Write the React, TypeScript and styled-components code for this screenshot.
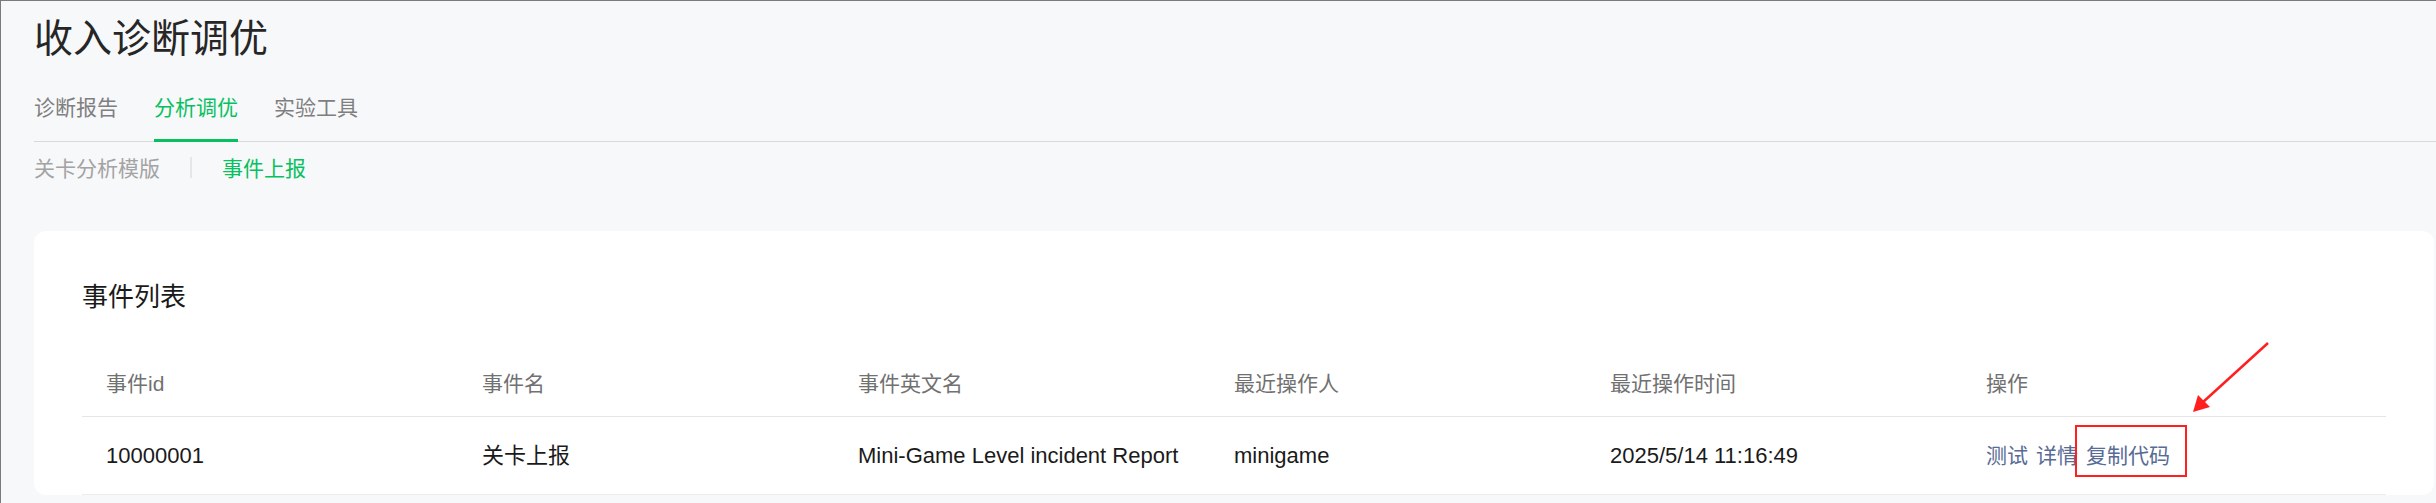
import styled, { createGlobalStyle } from 'styled-components'

const GlobalStyle = createGlobalStyle`
  html, body {
    margin: 0;
    padding: 0;
    background: #f7f8fa;
  }
  body {
    font-family: "Liberation Sans", "Noto Sans CJK SC", sans-serif;
  }
`

const Page = styled.div`
  box-sizing: border-box;
  min-height: 100vh;
  padding: 12px 2px 0 33px;
  border-top: 1px solid #7b7b7b;
  border-left: 1px solid #7b7b7b;
  background: #f7f8fa;
`

const Title = styled.h1`
  margin: 0;
  font-size: 39px;
  line-height: 52px;
  font-weight: 400;
  color: #262626;
`

const Tabs = styled.nav`
  display: flex;
  gap: 36px;
  margin: 28px -2px 0 0;
  border-bottom: 1px solid #d9d9d9;
`

const Tab = styled.div<{ active?: boolean }>`
  margin-bottom: -1px;
  padding-bottom: 16px;
  font-size: 21px;
  line-height: 30px;
  color: ${({ active }) => (active ? '#07c160' : '#7f7f7f')};
  border-bottom: 3px solid ${({ active }) => (active ? '#07c160' : 'transparent')};
`

const SubTabs = styled.div`
  display: flex;
  align-items: flex-start;
  margin-top: 12px;
`

const SubTab = styled.div<{ active?: boolean }>`
  font-size: 21px;
  line-height: 30px;
  color: ${({ active }) => (active ? '#07c160' : '#a3a3a3')};
`

const Divider = styled.span`
  width: 2px;
  height: 21px;
  margin: 3px 30px 0 30px;
  background: #e6e6e6;
`

const Card = styled.section`
  margin-top: 47px;
  padding: 48px 48px 0;
  background: #fff;
  border-radius: 12px;
`

const CardTitle = styled.h2`
  margin: 0 0 38px;
  font-size: 26px;
  line-height: 36px;
  font-weight: 400;
  color: #1a1a1a;
`

const Table = styled.table`
  width: 100%;
  table-layout: fixed;
  border-collapse: separate;
  border-spacing: 0;
`

const Th = styled.th`
  padding: 16px 24px 17px;
  text-align: left;
  font-size: 21px;
  line-height: 30px;
  font-weight: 400;
  color: #717171;
  border-bottom: 1px solid #e6e6e6;
`

const Td = styled.td`
  padding: 24px 24px 23px;
  font-size: 22px;
  line-height: 30px;
  color: #1a1a1a;
  border-bottom: 1px solid #ececec;
  white-space: nowrap;
`

const Actions = styled.div`
  display: flex;
  gap: 8px;
  font-size: 21px;
  line-height: 30px;
`

const Link = styled.a<{ marked?: boolean }>`
  position: relative;
  display: block;
  color: #576b95;
  text-decoration: none;
  cursor: pointer;

  ${({ marked }) =>
    marked &&
    `
    &::after {
      content: '';
      position: absolute;
      top: -16px;
      bottom: -6px;
      left: -11px;
      right: -17px;
      border: 2.5px solid #ff1f1f;
    }
  `}
`

// annotation arrow pointing at the highlighted link
const Arrow = styled.svg`
  position: absolute;
  left: 104px;
  top: -102px;
  overflow: visible;
`

const columns = ['事件id', '事件名', '事件英文名', '最近操作人', '最近操作时间', '操作']

const events = [
  {
    id: '10000001',
    name: '关卡上报',
    englishName: 'Mini-Game Level incident Report',
    operator: 'minigame',
    time: '2025/5/14 11:16:49',
  },
]

export default function App() {
  return (
    <Page>
      <GlobalStyle />
      <Title>收入诊断调优</Title>

      <Tabs>
        <Tab>诊断报告</Tab>
        <Tab active>分析调优</Tab>
        <Tab>实验工具</Tab>
      </Tabs>

      <SubTabs>
        <SubTab>关卡分析模版</SubTab>
        <Divider />
        <SubTab active>事件上报</SubTab>
      </SubTabs>

      <Card>
        <CardTitle>事件列表</CardTitle>
        <Table>
          <colgroup>
            <col style={{ width: 376 }} />
            <col style={{ width: 376 }} />
            <col style={{ width: 376 }} />
            <col style={{ width: 376 }} />
            <col style={{ width: 376 }} />
            <col />
          </colgroup>
          <thead>
            <tr>
              {columns.map(c => (
                <Th key={c}>{c}</Th>
              ))}
            </tr>
          </thead>
          <tbody>
            {events.map(e => (
              <tr key={e.id}>
                <Td>{e.id}</Td>
                <Td>{e.name}</Td>
                <Td>{e.englishName}</Td>
                <Td>{e.operator}</Td>
                <Td>{e.time}</Td>
                <Td>
                  <Actions>
                    <Link>测试</Link>
                    <Link>详情</Link>
                    <Link marked>
                      复制代码
                      <Arrow width="84" height="78" viewBox="0 0 84 78">
                        <line x1="78" y1="4" x2="12" y2="64" stroke="#ff1f1f" strokeWidth="2.5" />
                        <polygon points="3,73 8,56 20,68" fill="#ff1f1f" />
                      </Arrow>
                    </Link>
                  </Actions>
                </Td>
              </tr>
            ))}
          </tbody>
        </Table>
      </Card>
    </Page>
  )
}
